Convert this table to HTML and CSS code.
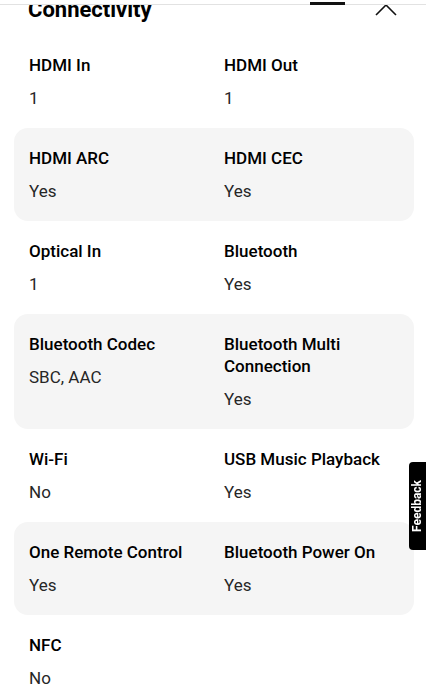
FILE: index.html
```html
<!DOCTYPE html>
<html lang="en">
<head>
<meta charset="utf-8">
<title>Connectivity specs</title>
<link rel="stylesheet" href="styles.css">
</head>
<body>
<div class="tabbar"><span class="tab-indicator"></span></div>
<section class="specs">
  <div class="specs-head">
    <h2 class="specs-title">Connectivity</h2>
    <svg class="chevron" width="22" height="12" viewBox="0 0 22 12" aria-hidden="true"><polyline points="1,11 11,1 21,11" fill="none" stroke="#111" stroke-width="1.6"/></svg>
  </div>
  <div class="spec-list">
    <div class="spec-row">
      <div class="spec"><div class="spec-label">HDMI In</div><div class="spec-value">1</div></div>
      <div class="spec"><div class="spec-label">HDMI Out</div><div class="spec-value">1</div></div>
    </div>
    <div class="spec-row shade">
      <div class="spec"><div class="spec-label">HDMI ARC</div><div class="spec-value">Yes</div></div>
      <div class="spec"><div class="spec-label">HDMI CEC</div><div class="spec-value">Yes</div></div>
    </div>
    <div class="spec-row">
      <div class="spec"><div class="spec-label">Optical In</div><div class="spec-value">1</div></div>
      <div class="spec"><div class="spec-label">Bluetooth</div><div class="spec-value">Yes</div></div>
    </div>
    <div class="spec-row shade">
      <div class="spec"><div class="spec-label">Bluetooth Codec</div><div class="spec-value">SBC, AAC</div></div>
      <div class="spec"><div class="spec-label">Bluetooth Multi Connection</div><div class="spec-value">Yes</div></div>
    </div>
    <div class="spec-row">
      <div class="spec"><div class="spec-label">Wi-Fi</div><div class="spec-value">No</div></div>
      <div class="spec"><div class="spec-label">USB Music Playback</div><div class="spec-value">Yes</div></div>
    </div>
    <div class="spec-row shade">
      <div class="spec"><div class="spec-label">One Remote Control</div><div class="spec-value">Yes</div></div>
      <div class="spec"><div class="spec-label">Bluetooth Power On</div><div class="spec-value">Yes</div></div>
    </div>
    <div class="spec-row">
      <div class="spec"><div class="spec-label">NFC</div><div class="spec-value">No</div></div>
    </div>
  </div>
</section>
<a class="feedback" href="#">Feedback</a>
</body>
</html>
```

FILE: styles.css
```css
html, body {
  margin: 0;
  padding: 0;
  background: #fff;
  overflow: hidden;
}
body {
  font-family: Roboto, "Noto Sans", sans-serif;
  color: #000;
}
.tabbar {
  position: fixed;
  top: 0;
  left: 0;
  right: 0;
  height: 4px;
  background: #fff;
  border-bottom: 1px solid #e2e2e2;
  z-index: 5;
}
.tab-indicator {
  position: absolute;
  left: 310px;
  width: 35px;
  bottom: -1px;
  height: 3px;
  background: #111;
}
.specs-head {
  display: flex;
  align-items: center;
  justify-content: space-between;
  margin-top: -4px;
  padding: 0 29px 0 28px;
  height: 28px;
  margin-bottom: 11px;
}
.specs-title {
  margin: 0;
  font-size: 22px;
  line-height: 28px;
  font-weight: 700;
  color: #000;
}
.chevron {
  display: block;
  margin-top: -1px;
}
.spec-list {
  padding: 0 12px 0 14px;
}
.spec-row {
  display: grid;
  grid-template-columns: 1fr 1fr;
  column-gap: 20px;
  padding: 19px 15px 19px;
  border-radius: 14px;
}
.spec-row.shade {
  background: #f5f5f5;
}
.spec-label {
  font-size: 17px;
  line-height: 22px;
  font-weight: 500;
  color: #000;
}
.spec-value {
  margin-top: 11px;
  font-size: 17px;
  line-height: 22px;
  font-weight: 400;
  color: #262626;
}
.feedback {
  position: fixed;
  right: 0;
  top: 462px;
  width: 17px;
  height: 88px;
  background: #000;
  color: #fff;
  font-size: 12px;
  font-weight: 700;
  text-decoration: none;
  writing-mode: vertical-rl;
  transform: rotate(180deg);
  border-radius: 0 4px 4px 0;
  display: flex;
  align-items: center;
  justify-content: center;
  line-height: 17px;
}
```
